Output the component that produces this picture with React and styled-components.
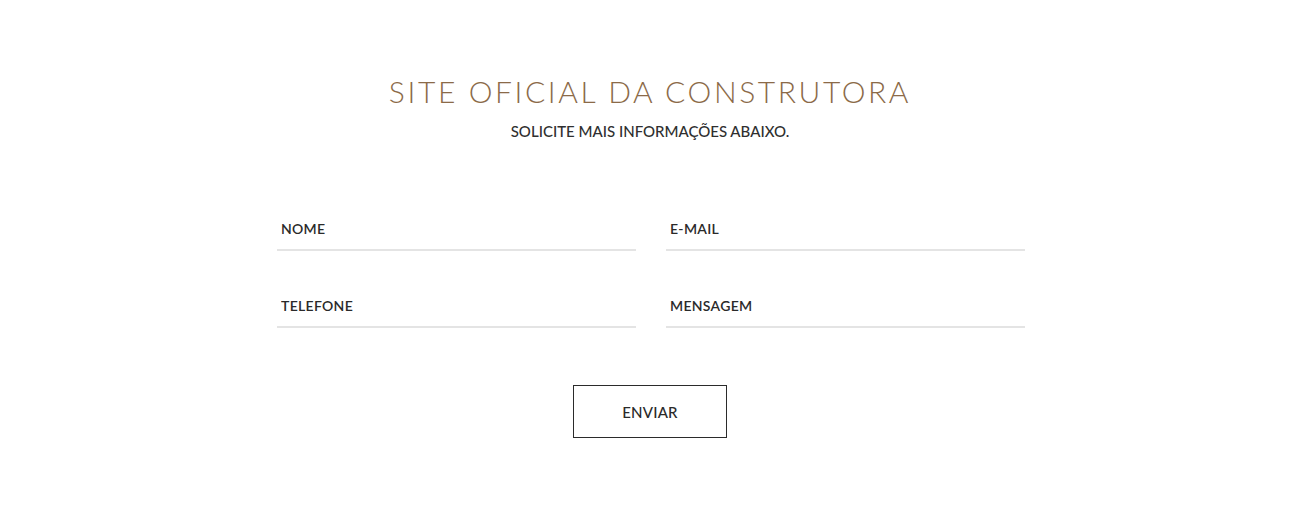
import React from "react";
import styled, { createGlobalStyle } from "styled-components";

const Global = createGlobalStyle`
  html, body { margin: 0; padding: 0; background: #fff; }
  body { font-family: "Lato", "Liberation Sans", sans-serif; }
  * { box-sizing: border-box; }
`;

const Section = styled.section`
  display: flex;
  flex-direction: column;
  align-items: center;
  padding-top: 72px;
  padding-bottom: 74px;
`;

const Title = styled.h1`
  margin: 0;
  font-family: "Lato", sans-serif;
  font-weight: 300;
  font-size: 30px;
  line-height: 38px;
  letter-spacing: 2.6px;
  color: #8b6a48;
  text-transform: uppercase;
`;

const Subtitle = styled.p`
  margin: 12px 0 0;
  font-family: "Lato", sans-serif;
  font-weight: 500;
  font-size: 15px;
  line-height: 18px;
  letter-spacing: 0;
  color: #2f2f2f;
`;

const Form = styled.form`
  margin-top: 70px;
  margin-left: 2px;
  width: 748px;
  display: grid;
  grid-template-columns: 1fr 1fr;
  column-gap: 30px;
  row-gap: 36px;
`;

const Field = styled.input`
  width: 100%;
  height: 41px;
  border: none;
  border-bottom: 2px solid #e4e4e4;
  padding: 0 4px 2px;
  font-family: "Lato", sans-serif;
  font-weight: 600;
  font-size: 14px;
  letter-spacing: 0.3px;
  color: #2a2a2a;
  outline: none;
  background: transparent;
  &::placeholder { color: #2a2a2a; opacity: 1; }
`;

const Actions = styled.div`
  grid-column: 1 / -1;
  display: flex;
  justify-content: center;
  margin-top: 21px;
  padding-right: 2px;
`;

const Button = styled.button`
  width: 154px;
  height: 53px;
  border: 1px solid #2b2b2b;
  background: #fff;
  font-family: "Lato", sans-serif;
  font-weight: 500;
  font-size: 15px;
  letter-spacing: 0.2px;
  color: #2a2a2a;
  cursor: pointer;
`;

export default function App() {
  return (
    <>
      <Global />
      <Section>
        <Title>Site Oficial da Construtora</Title>
        <Subtitle>SOLICITE MAIS INFORMAÇÕES ABAIXO.</Subtitle>
        <Form onSubmit={(e) => e.preventDefault()}>
          <Field placeholder="NOME" />
          <Field placeholder="E-MAIL" />
          <Field placeholder="TELEFONE" />
          <Field placeholder="MENSAGEM" />
          <Actions>
            <Button type="submit">ENVIAR</Button>
          </Actions>
        </Form>
      </Section>
    </>
  );
}
